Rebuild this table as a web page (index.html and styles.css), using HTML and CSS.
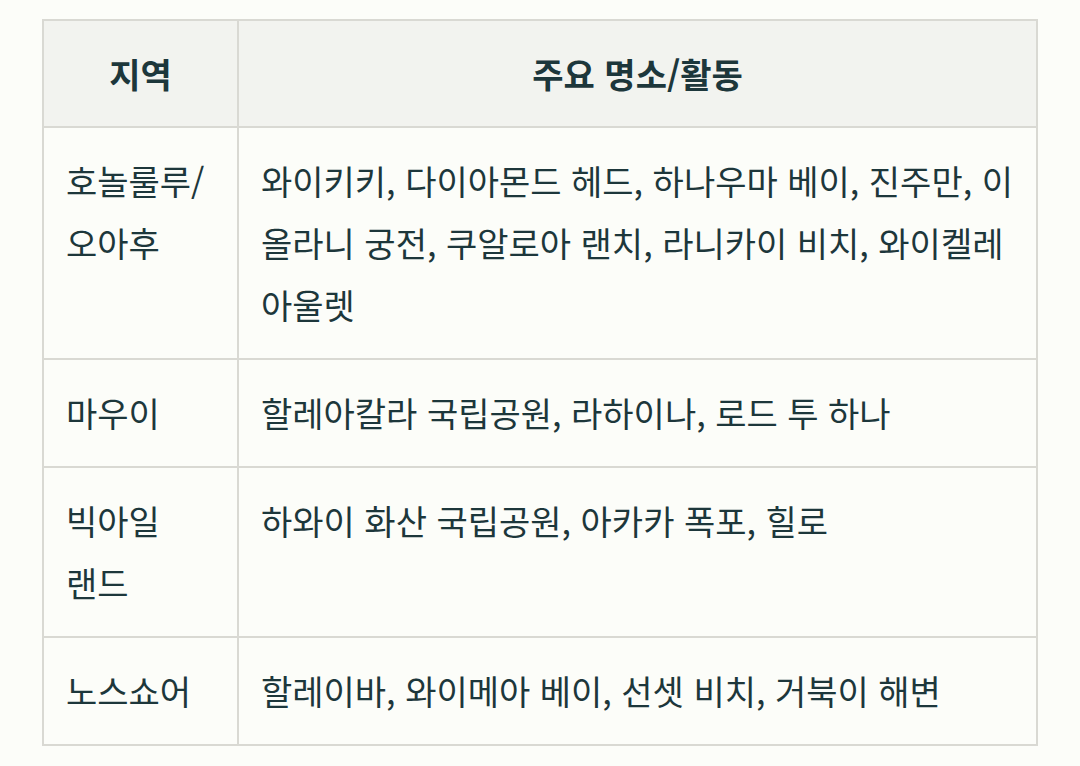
FILE: index.html
```html
<!DOCTYPE html>
<html lang="ko">
<head>
<meta charset="utf-8">
<link rel="stylesheet" href="styles.css">
</head>
<body>
<div class="wrap">
<table class="info">
<thead>
<tr><th class="c1">지역</th><th class="c2">주요 명소/활동</th></tr>
</thead>
<tbody>
<tr><td class="c1">호놀룰루/오아후</td><td class="c2">와이키키, 다이아몬드 헤드, 하나우마 베이, 진주만, 이올라니 궁전, 쿠알로아 랜치, 라니카이 비치, 와이켈레 아울렛</td></tr>
<tr><td class="c1">마우이</td><td class="c2">할레아칼라 국립공원, 라하이나, 로드 투 하나</td></tr>
<tr><td class="c1">빅아일<br>랜드</td><td class="c2">하와이 화산 국립공원, 아카카 폭포, 힐로</td></tr>
<tr><td class="c1">노스쇼어</td><td class="c2">할레이바, 와이메아 베이, 선셋 비치, 거북이 해변</td></tr>
</tbody>
</table>
</div>
</body>
</html>
```
FILE: styles.css
```css
html, body {
  margin: 0;
  padding: 0;
  background: #fcfdf9;
}
.wrap {
  padding: 19px 0 0 42px;
}
.info {
  border-collapse: separate;
  border-spacing: 0;
  table-layout: fixed;
  width: 996px;
  border-top: 2px solid #d9d9d3;
  border-left: 2px solid #d9d9d3;
  font-family: "Noto Sans CJK KR", "Noto Sans", sans-serif;
  font-size: 34px;
  line-height: 62px;
  color: #1d373b;
}
.info th, .info td {
  padding: 22px;
  border-right: 2px solid #d9d9d3;
  border-bottom: 2px solid #d9d9d3;
  vertical-align: top;
  text-align: left;
}
.info th {
  background: #f2f3ef;
  font-weight: 700;
  text-align: center;
  line-height: 61px;
}
.info .c1 {
  width: 149px;
}
.info td.c1 {
  word-break: break-all;
}
```
